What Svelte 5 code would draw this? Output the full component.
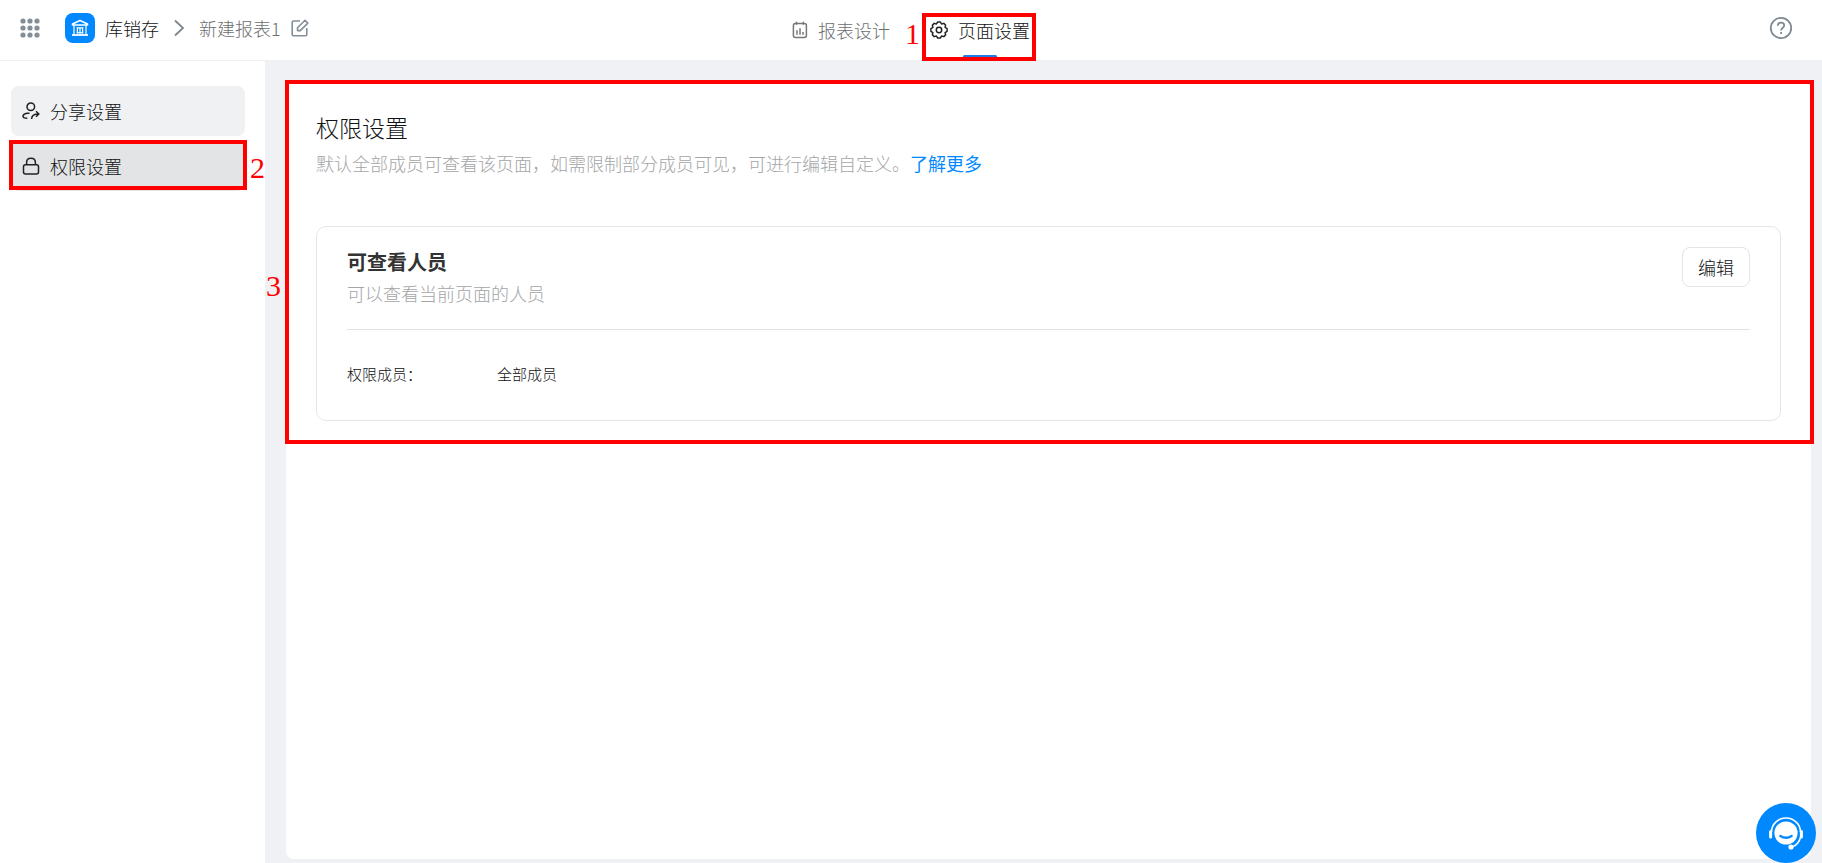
<script lang="ts">
	let appName = '库销存';
	let reportName = '新建报表1';
	let members = '全部成员';

	const dots = [3, 10, 17];

	function gear(teeth: number, outer: number, inner: number) {
		const step = 360 / teeth;
		const points: string[] = [];
		const add = (deg: number, r: number) => {
			const a = (deg * Math.PI) / 180;
			points.push(`${(9 + r * Math.sin(a)).toFixed(2)} ${(9 - r * Math.cos(a)).toFixed(2)}`);
		};
		for (let i = 0; i < teeth; i++) {
			add(i * step - 9, outer);
			add(i * step + 9, outer);
			add(i * step + step / 2, inner);
		}
		return `M${points.join('L')}Z`;
	}
</script>

<div class="page">
	<header>
		<div class="crumbs">
			<button class="icon-btn" aria-label="应用列表">
				<svg width="20" height="20" viewBox="0 0 20 20" fill="#858e97">
					{#each dots as y}
						{#each dots as x}
							<circle cx={x} cy={y} r="2.6" />
						{/each}
					{/each}
				</svg>
			</button>
			<a class="app" href="#app">
				<span class="app-logo">
					<svg width="18" height="18" viewBox="0 0 18 18" fill="none" stroke="#fff" stroke-width="1.6">
						<path d="M1.5 6V5L9 1.6L16.5 5v1Z" stroke-linejoin="round" />
						<path d="M3 6.5v9M15 6.5v9M6.4 8.6v5.4M9 8.6v5.4M11.6 8.6v5.4M5.6 8.8h6.8M5.6 13.8h6.8" stroke-width="1.2" />
						<path d="M1 16h16" stroke-width="1.8" />
					</svg>
				</span>
				<span>{appName}</span>
			</a>
			<svg class="chevron" width="12" height="18" viewBox="0 0 12 18" fill="none" stroke="#7d868e" stroke-width="1.8">
				<path d="M2 1.5L10 9L2 16.5" />
			</svg>
			<span class="report">{reportName}</span>
			<button class="icon-btn" aria-label="重命名">
				<svg width="18" height="18" viewBox="0 0 18 18" fill="none" stroke="#858e97" stroke-width="1.6" stroke-linejoin="round">
					<path d="M9 2H2.5Q1.2 2 1.2 3.3V15.5Q1.2 16.8 2.5 16.8H14.5Q15.8 16.8 15.8 15.5V9" />
					<path d="M6.5 8.8L14 1.3L16.8 4.1L9.3 11.6H6.5Z" />
				</svg>
			</button>
		</div>

		<nav class="tabs">
			<a class="tab" href="#design">
				<svg width="16" height="18" viewBox="0 0 16 18" fill="none" stroke="#777" stroke-width="1.5">
					<rect x="1.4" y="2.6" width="13" height="14" rx="2" />
					<path d="M4.5 0.8v3M11.3 0.8v3M5 9.3v4.4M8 7.3v6.4M11 11v2.7" />
				</svg>
				<span>报表设计</span>
			</a>
			<a class="tab active" href="#settings">
				<svg width="18" height="18" viewBox="0 0 18 18" fill="none" stroke="#222" stroke-width="1.5" stroke-linejoin="round">
					<path d={gear(8, 8.2, 6.6)} />
					<circle cx="9" cy="9" r="2.7" />
				</svg>
				<span>页面设置</span>
				<i class="mark mark-tab"><b>1</b></i>
			</a>
		</nav>

		<div class="tools">
			<button class="icon-btn" aria-label="帮助">
				<svg width="24" height="24" viewBox="0 0 24 24" fill="none" stroke="#7f8a94" stroke-width="1.8">
					<circle cx="12" cy="12" r="10.2" />
					<path d="M8.8 9.8C8.8 7.6 10.2 6.7 12 6.7S15.2 7.8 15.2 9.5C15.2 11.7 12.1 11.7 12.1 14.4" />
					<path d="M12.1 16v2" />
				</svg>
			</button>
		</div>
	</header>

	<div class="body">
		<aside>
			<a class="item" href="#share">
				<svg width="18" height="18" viewBox="0 0 18 18" fill="none" stroke="#222" stroke-width="1.5">
					<circle cx="8.8" cy="4.8" r="3.8" />
					<path d="M7.5 11.2H5Q1.2 11.8 1 14.2Q1 16.2 5.3 16.2" />
					<path d="M9.6 17C9.6 13.6 11.6 12 16.5 12M14 9.3L16.8 12L14 14.7" />
				</svg>
				<span>分享设置</span>
			</a>
			<a class="item active" href="#permission">
				<svg width="18" height="18" viewBox="0 0 18 18" fill="none" stroke="#222" stroke-width="1.5">
					<rect x="1.5" y="7.8" width="15" height="9.2" rx="2" />
					<path d="M4.6 7.8V5.5C4.6 -0.1 13.4 -0.1 13.4 5.5V7.8" />
				</svg>
				<span>权限设置</span>
				<i class="mark mark-item"><b>2</b></i>
			</a>
		</aside>

		<main>
			<section class="permission">
				<h1>权限设置</h1>
				<p class="desc">
					默认全部成员可查看该页面，如需限制部分成员可见，可进行编辑自定义。<a href="#more">了解更多</a>
				</p>

				<div class="card">
					<div class="card-head">
						<div>
							<h2>可查看人员</h2>
							<p class="desc">可以查看当前页面的人员</p>
						</div>
						<button class="edit">编辑</button>
					</div>
					<dl>
						<dt>权限成员：</dt>
						<dd>{members}</dd>
					</dl>
				</div>
				<i class="mark mark-section"><b>3</b></i>
			</section>
		</main>
	</div>

	<button class="service" aria-label="在线客服">
		<svg width="38" height="38" viewBox="0 0 38 38" fill="none" stroke="#fff">
			<path d="M4.5 18A14.5 14 0 0 1 33.5 18" stroke-width="1.6" />
			<circle cx="19" cy="19" r="11.6" fill="#fff" stroke="none" />
			<path d="M13.4 22Q19 25.4 24.6 22" stroke="#0089ff" stroke-width="2.4" stroke-linecap="round" />
			<path d="M3.6 17.5v5.5M34.4 17.5v5.5" stroke-width="3" stroke-linecap="round" />
			<path d="M33.6 23Q31.8 30.5 25 33" stroke-width="1.6" />
			<circle cx="24" cy="33" r="2.6" fill="#fff" stroke="none" />
		</svg>
	</button>
</div>

<style>
	:global(body) {
		margin: 0;
	}

	.page {
		min-height: 100vh;
		display: flex;
		flex-direction: column;
		background: #fff;
		color: #101214;
		font-family: "Noto Sans CJK SC", sans-serif;
		font-size: 18px;
		font-weight: 300;
		line-height: 26px;
	}

	a {
		color: inherit;
		text-decoration: none;
	}

	button {
		font: inherit;
		color: inherit;
		cursor: pointer;
	}

	svg {
		display: block;
		flex: none;
	}

	h1,
	h2,
	p,
	dl,
	dd {
		margin: 0;
	}

	.icon-btn {
		padding: 0;
		border: none;
		background: none;
	}

	/* header */
	header {
		display: grid;
		grid-template-columns: 1fr auto 1fr;
		height: 60px;
		border-bottom: 1px solid #eff0f2;
	}

	.crumbs {
		display: flex;
		align-items: center;
		height: 56px;
		padding-left: 20px;
	}

	.app {
		display: flex;
		align-items: center;
		gap: 10px;
		margin-left: 25px;
	}

	.app-logo {
		display: flex;
		align-items: center;
		justify-content: center;
		width: 30px;
		height: 30px;
		border-radius: 8px;
		background: #0089ff;
	}

	.chevron {
		margin: 0 14px;
	}

	.report {
		margin-right: 10px;
		color: #6c6e6f;
	}

	.tabs {
		display: flex;
		gap: 40px;
	}

	.tab {
		position: relative;
		display: flex;
		align-items: center;
		gap: 10px;
		color: #6c6e6f;
	}

	.tab.active {
		color: #101214;
	}

	.tab.active::after {
		content: '';
		position: absolute;
		bottom: 2px;
		left: 50%;
		width: 34px;
		height: 3px;
		margin-left: -17px;
		border-radius: 2px;
		background: #1c7be6;
	}

	.tools {
		display: flex;
		align-items: center;
		justify-content: flex-end;
		height: 56px;
		padding-right: 29px;
	}

	/* side menu and content */
	.body {
		flex: 1;
		display: flex;
	}

	aside {
		flex: none;
		display: flex;
		flex-direction: column;
		gap: 5px;
		width: 234px;
		padding: 25px 20px 25px 11px;
	}

	.item {
		position: relative;
		display: flex;
		align-items: center;
		gap: 10px;
		height: 50px;
		padding: 0 11px;
		border-radius: 8px;
		background: #f0f1f3;
	}

	.item.active {
		background: #e3e4e6;
	}

	main {
		flex: 1;
		display: flex;
		padding: 21px 11px 4px 21px;
		background: #f0f1f4;
	}

	.permission {
		position: relative;
		flex: 1;
		padding: 28px 30px;
		border-radius: 8px;
		background: #fff;
	}

	h1 {
		font-size: 23px;
		font-weight: 300;
		line-height: 34px;
	}

	.desc {
		color: #a4a5a7;
		line-height: 34px;
	}

	.permission > .desc {
		margin-top: 2px;
	}

	.desc a {
		color: #0089ff;
		font-weight: 400;
	}

	.card {
		margin-top: 46px;
		padding: 20px 30px 32px;
		border: 1px solid #e5e6e8;
		border-radius: 10px;
	}

	.card-head {
		display: flex;
		align-items: flex-start;
		justify-content: space-between;
		padding-bottom: 19px;
		border-bottom: 1px solid #e1e2e3;
	}

	h2 {
		color: #333;
		font-size: 20px;
		font-weight: 700;
		line-height: 30px;
	}

	.card .desc {
		line-height: 33px;
	}

	.edit {
		height: 40px;
		padding: 0 15px;
		border: 1px solid #e3e4e6;
		border-radius: 8px;
		background: #fff;
	}

	dl {
		display: flex;
		padding-top: 30px;
		font-size: 15px;
		line-height: 28px;
	}

	dt {
		width: 150px;
	}

	/* numbered step frames */
	.mark {
		position: absolute;
		border: 4px solid #f00;
		pointer-events: none;
		z-index: 1;
	}

	.mark b {
		position: absolute;
		color: #f00;
		font: 400 30px/30px "Liberation Serif", serif;
	}

	.mark-tab {
		inset: 13px -6px -1px -8px;
	}

	.mark-tab b {
		top: 2px;
		left: -21px;
	}

	.mark-item {
		inset: -1px -2px 1px;
	}

	.mark-item b {
		top: 9px;
		right: -22px;
	}

	.mark-section {
		inset: -2px -3px auto -1px;
		height: 356px;
	}

	.mark-section b {
		top: 187px;
		left: -23px;
	}

	.service {
		position: fixed;
		right: 6px;
		bottom: 0;
		display: flex;
		align-items: center;
		justify-content: center;
		width: 60px;
		height: 60px;
		padding: 0;
		border: none;
		border-radius: 50%;
		background: #0089ff;
		z-index: 2;
	}
</style>
